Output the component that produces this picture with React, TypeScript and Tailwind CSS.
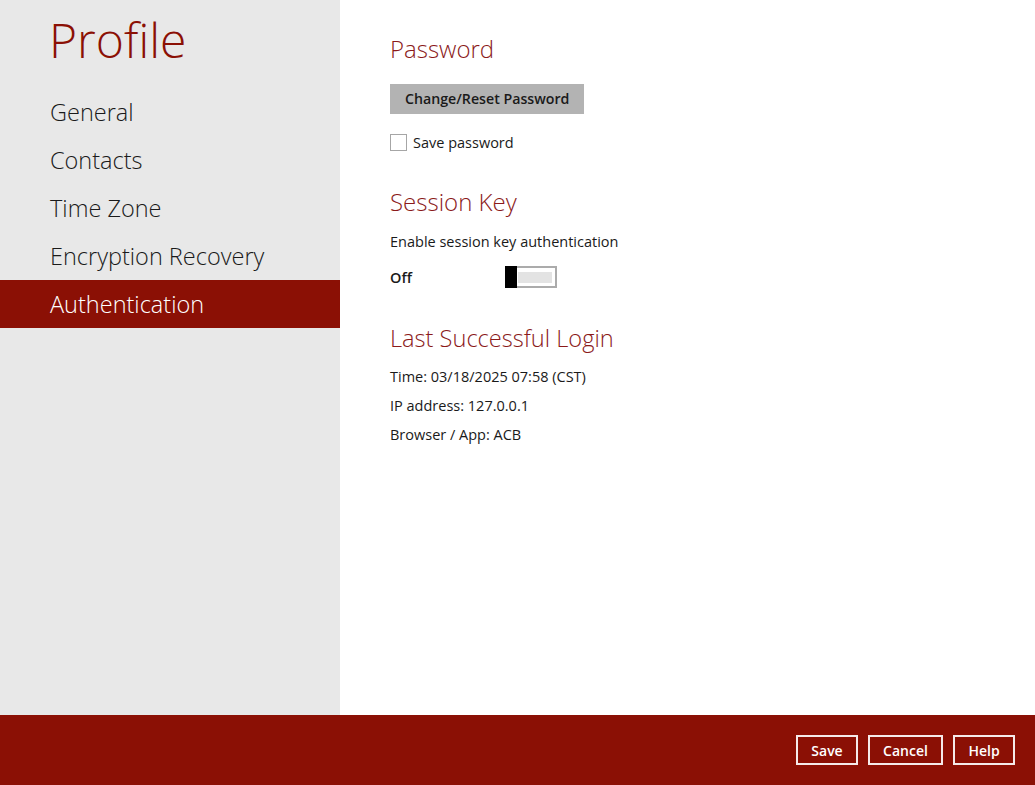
import { useState } from "react";

const navItems = ["General", "Contacts", "Time Zone", "Encryption Recovery", "Authentication"];

export default function App() {
  const [active] = useState("Authentication");
  const [savePwd, setSavePwd] = useState(false);
  const [sessionKey, setSessionKey] = useState(false);

  return (
    <div className="flex h-[785px] w-[1035px] flex-col overflow-hidden bg-white font-['Open_Sans',sans-serif] text-[#1a1a1a]">
      <div className="flex min-h-0 flex-1">
        {/* Sidebar */}
        <aside className="w-[340px] shrink-0 bg-[#e8e8e8]">
          <h1 className="h-[88px] pl-[49px] pt-[8px] text-[48px] leading-[64px] font-light text-[#8b1005]">Profile</h1>
          <nav className="flex flex-col">
            {navItems.map(item => (
              <div
                key={item}
                className={`flex h-[48px] items-center pl-[50px] pt-[2px] text-[23.5px] font-light ${
                  item === active ? "bg-[#8b1005] text-white" : "text-[#1a1a1a]"
                }`}
              >
                {item}
              </div>
            ))}
          </nav>
        </aside>

        {/* Content */}
        <main className="flex-1 pl-[50px] pt-[34px] text-[14.5px]">
          <h2 className="text-[24px] leading-[30px] font-light text-[#8b1a1a]">Password</h2>
          <button className="mt-[20px] h-[30px] bg-[#b3b3b3] px-[15px] text-[14.2px] font-semibold text-[#1a1a1a]">
            Change/Reset Password
          </button>
          <label className="mt-[20px] flex h-[17px] items-center gap-[6px]">
            <span
              onClick={() => setSavePwd(!savePwd)}
              className="h-[17px] w-[17px] border border-[#a6a6a6] bg-white"
            />
            <span>Save password</span>
          </label>

          <h2 className="mt-[36px] text-[24px] leading-[30px] font-light text-[#8b1a1a]">Session Key</h2>
          <p className="mt-[15px] leading-[20px]">Enable session key authentication</p>
          <div className="mt-[14px] flex items-center">
            <span className="w-[115px] pt-[1px] font-semibold">{sessionKey ? "On" : "Off"}</span>
            <button
              onClick={() => setSessionKey(!sessionKey)}
              className="flex h-[22px] w-[52px] items-center border-2 border-[#ababab] bg-white"
            >
              <span className="h-[22px] w-[12px] -ml-[2px] bg-black" />
              <span className="ml-[1px] h-[11px] w-[34px] bg-[#e3e3e3]" />
            </button>
          </div>

          <h2 className="mt-[34px] text-[23.6px] leading-[30px] font-light text-[#8b1a1a]">Last Successful Login</h2>
          <div className="mt-[14px] flex flex-col gap-[9px] leading-[20px]">
            <p>Time: 03/18/2025 07:58 (CST)</p>
            <p>IP address: 127.0.0.1</p>
            <p>Browser / App: ACB</p>
          </div>
        </main>
      </div>

      {/* Footer */}
      <footer className="flex h-[70px] shrink-0 items-center justify-end gap-[10px] bg-[#8b1005] pr-[20px]">
        <button className="h-[30px] w-[62px] border-2 border-[#f5eaea] text-[14px] font-semibold text-white">Save</button>
        <button className="h-[30px] w-[75px] border-2 border-[#f5eaea] text-[14px] font-semibold text-white">Cancel</button>
        <button className="h-[30px] w-[62px] border-2 border-[#f5eaea] text-[14px] font-semibold text-white">Help</button>
      </footer>
    </div>
  );
}
